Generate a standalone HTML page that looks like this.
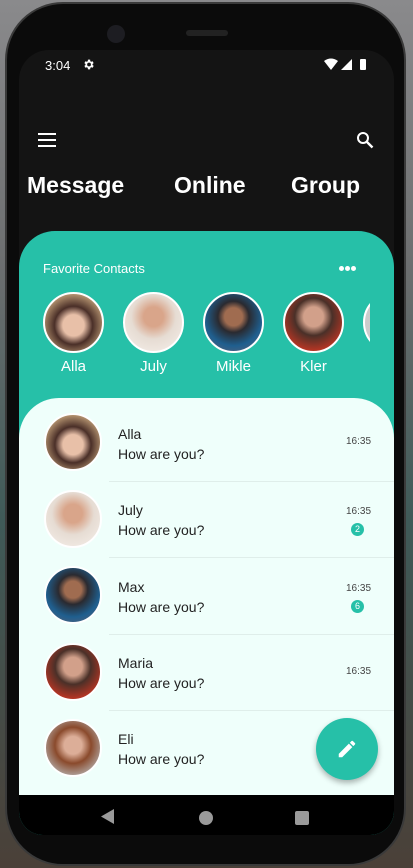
<!DOCTYPE html>
<html><head><meta charset="utf-8"><style>
*{margin:0;padding:0;box-sizing:border-box}
body{width:413px;height:868px;overflow:hidden;background:linear-gradient(180deg,#8a8a8c 0%,#6d6f70 30%,#3f5a58 60%,#4a4038 100%);font-family:"Liberation Sans",sans-serif;position:relative}
.frame{position:absolute;left:5px;top:2px;width:401px;height:864px;border-radius:58px;background:#0b0b0b;border:2px solid #3a3a3a}
.screen{position:absolute;left:19px;top:50px;width:375px;height:785px;border-radius:30px 30px 24px 24px;background:#141414;overflow:hidden}
.abs{position:absolute}
.t{color:#fff}
.av{position:absolute;border-radius:50%;border:2.5px solid #fff}
.row .n{position:absolute;left:99px;font-size:14px;color:#222}
.time{position:absolute;left:327px;font-size:10px;color:#444}
.badge{position:absolute;left:332px;width:13px;height:13px;border-radius:50%;background:#26c0a8;color:#fff;font-size:9px;text-align:center;line-height:13px}
.div{position:absolute;left:90px;right:0;height:1px;background:#dfeeea}
.dot{position:absolute;top:35px;width:5px;height:5px;border-radius:50%;background:#fff}
</style></head><body>
<div class="frame"></div>
<div class="abs" style="left:107px;top:25px;width:18px;height:18px;border-radius:50%;background:#1d1d22"></div>
<div class="abs" style="left:186px;top:30px;width:42px;height:6px;border-radius:3px;background:#222"></div>
<div class="screen">
  <div class="abs t" style="left:26px;top:8px;font-size:13px">3:04</div>
  <svg class="abs" style="left:63px;top:8px" width="13" height="13" viewBox="0 0 24 24"><path fill="#fff" d="M19.4 13a7.5 7.5 0 000-2l2.1-1.6-2-3.5-2.5 1a7 7 0 00-1.7-1L15 3h-4l-.4 2.9a7 7 0 00-1.7 1l-2.5-1-2 3.5L6.5 11a7.5 7.5 0 000 2l-2.1 1.6 2 3.5 2.5-1a7 7 0 001.7 1L11 21h4l.4-2.9a7 7 0 001.7-1l2.5 1 2-3.5zM13 15.5A3.5 3.5 0 1113 8.5a3.5 3.5 0 010 7z"/></svg>
  <svg class="abs" style="left:305px;top:8px" width="46" height="13" viewBox="0 0 46 13"><path fill="#fff" d="M0 3 Q7 -2 14 3 L7 12Z"/><path fill="#fff" d="M17 12 L28 1 L28 12Z"/><rect x="36" y="1" width="6" height="11" rx="1" fill="#fff"/></svg>
  <svg class="abs" style="left:19px;top:83px" width="18" height="14"><rect y="0" width="18" height="2" fill="#fff"/><rect y="6" width="18" height="2" fill="#fff"/><rect y="12" width="18" height="2" fill="#fff"/></svg>
  <svg class="abs" style="left:337px;top:81px" width="18" height="18" viewBox="0 0 18 18"><circle cx="7" cy="7" r="5" fill="none" stroke="#fff" stroke-width="2"/><path d="M11 11l5.5 5.5" stroke="#fff" stroke-width="2.4"/></svg>
  <div class="abs t" style="left:8px;top:122px;font-size:23px;font-weight:bold">Message</div>
  <div class="abs t" style="left:155px;top:122px;font-size:23px;font-weight:bold">Online</div>
  <div class="abs t" style="left:272px;top:122px;font-size:23px;font-weight:bold">Group</div>
  <div class="abs" style="left:0;top:181px;width:375px;height:620px;background:#26c0a8;border-radius:36px 36px 0 0;overflow:hidden">
    <div class="abs t" style="left:24px;top:30px;font-size:13px">Favorite Contacts</div>
    <div class="dot" style="left:320px"></div><div class="dot" style="left:326px"></div><div class="dot" style="left:332px"></div>
    <div class="av" style="left:24px;top:61px;width:61px;height:61px;background:radial-gradient(circle at 50% 55%,#e8c0a8 0 25%,#4a2f28 45%,#c9a77e 80%)"></div>
    <div class="av" style="left:104px;top:61px;width:61px;height:61px;background:radial-gradient(circle at 50% 40%,#d9a58a 0 22%,#e6dcd3 50%,#f3ece6 90%)"></div>
    <div class="av" style="left:184px;top:61px;width:61px;height:61px;background:radial-gradient(circle at 50% 40%,#a06c50 0 20%,#2a2a30 35%,#1f5f8f 65%,#556078 90%)"></div>
    <div class="av" style="left:264px;top:61px;width:61px;height:61px;background:radial-gradient(circle at 50% 40%,#d2a08a 0 22%,#4a3028 42%,#b33524 75%,#6a5a48)"></div>
    <div class="av" style="left:344px;top:61px;width:61px;height:61px;background:#ccc"></div>
    <div class="abs" style="left:351px;top:55px;width:30px;height:75px;background:#26c0a8"></div>
    <div class="abs t" style="left:24px;top:127px;width:61px;text-align:center;font-size:15px">Alla</div>
    <div class="abs t" style="left:104px;top:127px;width:61px;text-align:center;font-size:15px">July</div>
    <div class="abs t" style="left:184px;top:127px;width:61px;text-align:center;font-size:15px">Mikle</div>
    <div class="abs t" style="left:264px;top:127px;width:61px;text-align:center;font-size:15px">Kler</div>
  </div>
  <div class="abs row" style="left:0;top:348px;width:375px;height:400px;background:#effffb;border-radius:40px 40px 0 0">
    <div class="av" style="left:25px;top:15px;width:58px;height:58px;background:radial-gradient(circle at 50% 55%,#e8c0a8 0 25%,#4a2f28 45%,#c9a77e 80%)"></div>
    <div class="n" style="top:28px">Alla</div><div class="n" style="top:48px">How are you?</div>
    <div class="time" style="top:38px">16:35</div>
    <div class="div" style="top:83px"></div>
    <div class="av" style="left:25px;top:92px;width:58px;height:58px;background:radial-gradient(circle at 50% 40%,#d9a58a 0 22%,#e6dcd3 50%,#f3ece6 90%)"></div>
    <div class="n" style="top:104px">July</div><div class="n" style="top:124px">How are you?</div>
    <div class="time" style="top:108px">16:35</div><div class="badge" style="top:125px">2</div>
    <div class="div" style="top:159px"></div>
    <div class="av" style="left:25px;top:168px;width:58px;height:58px;background:radial-gradient(circle at 50% 40%,#a06c50 0 20%,#2a2a30 35%,#1f5f8f 65%,#556078 90%)"></div>
    <div class="n" style="top:181px">Max</div><div class="n" style="top:201px">How are you?</div>
    <div class="time" style="top:185px">16:35</div><div class="badge" style="top:202px">6</div>
    <div class="div" style="top:236px"></div>
    <div class="av" style="left:25px;top:245px;width:58px;height:58px;background:radial-gradient(circle at 50% 40%,#d2a08a 0 22%,#4a3028 42%,#b33524 75%,#6a5a48)"></div>
    <div class="n" style="top:257px">Maria</div><div class="n" style="top:277px">How are you?</div>
    <div class="time" style="top:268px">16:35</div>
    <div class="div" style="top:312px"></div>
    <div class="av" style="left:25px;top:321px;width:58px;height:58px;background:radial-gradient(circle at 50% 45%,#dcae98 0 22%,#8a4a2c 45%,#b8b8b8 85%)"></div>
    <div class="n" style="top:333px">Eli</div><div class="n" style="top:353px">How are you?</div>
  </div>
  <div class="abs" style="left:297px;top:668px;width:62px;height:62px;border-radius:50%;background:#26c0a8;box-shadow:0 3px 6px rgba(0,0,0,.3)"></div>
  <svg class="abs" style="left:317px;top:688px" width="22" height="22" viewBox="0 0 24 24"><path fill="#fff" d="M3 17.25V21h3.75L17.8 9.94l-3.75-3.75zM20.7 7.04a1 1 0 000-1.41l-2.34-2.34a1 1 0 00-1.41 0l-1.83 1.83 3.75 3.75z"/></svg>
  <div class="abs" style="left:0;top:745px;width:375px;height:40px;background:#000"></div>
  <svg class="abs" style="left:82px;top:759px" width="13" height="15"><path d="M13 0V15L0 7.5Z" fill="#9a9a9a"/></svg>
  <div class="abs" style="left:180px;top:761px;width:14px;height:14px;border-radius:50%;background:#9a9a9a"></div>
  <div class="abs" style="left:276px;top:761px;width:14px;height:14px;border-radius:2px;background:#9a9a9a"></div>
</div>
</body></html>
